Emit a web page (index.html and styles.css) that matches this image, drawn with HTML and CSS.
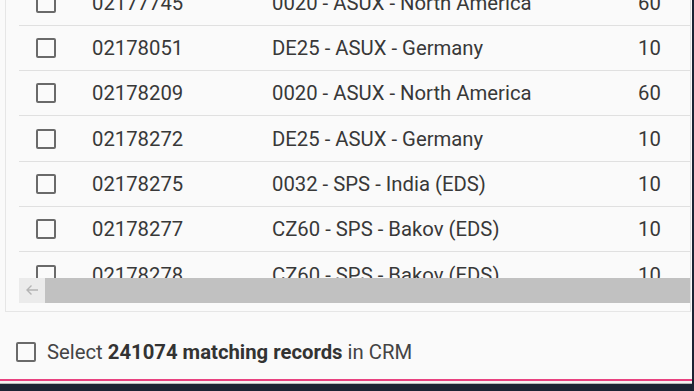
FILE: index.html
```
<!DOCTYPE html>
<html>
<head>
<meta charset="utf-8">
<link rel="stylesheet" href="styles.css">
</head>
<body>
<div class="app">
  <div class="screen">
    <div class="panel">
      <div class="viewport">
        <div class="rows">
          <div class="row"><span class="cell-check"><span class="box"></span></span><span>02177745</span><span>0020 - ASUX - North America</span><span>60</span></div>
          <div class="row"><span class="cell-check"><span class="box"></span></span><span>02178051</span><span>DE25 - ASUX - Germany</span><span>10</span></div>
          <div class="row"><span class="cell-check"><span class="box"></span></span><span>02178209</span><span>0020 - ASUX - North America</span><span>60</span></div>
          <div class="row"><span class="cell-check"><span class="box"></span></span><span>02178272</span><span>DE25 - ASUX - Germany</span><span>10</span></div>
          <div class="row"><span class="cell-check"><span class="box"></span></span><span>02178275</span><span>0032 - SPS - India (EDS)</span><span>10</span></div>
          <div class="row"><span class="cell-check"><span class="box"></span></span><span>02178277</span><span>CZ60 - SPS - Bakov (EDS)</span><span>10</span></div>
          <div class="row"><span class="cell-check"><span class="box"></span></span><span>02178278</span><span>CZ60 - SPS - Bakov (EDS)</span><span>10</span></div>
        </div>
      </div>
      <div class="hscroll">
        <span class="hbtn"><svg width="14" height="12" viewBox="0 0 14 12"><path d="M13 6H2M6.5 1.5L2 6l4.5 4.5" fill="none" stroke="#b4b4b4" stroke-width="1.4"/></svg></span>
        <span class="thumb"></span>
      </div>
    </div>
    <div class="footer">
      <span class="box"></span>
      <span class="footer-text">Select <b>241074 matching records</b> in CRM</span>
    </div>
  </div>
  <div class="strip"></div>
</div>
</body>
</html>
```
FILE: styles.css
```
html, body {
  margin: 0;
  padding: 0;
  background: #1b2333;
}
.app {
  width: 694px;
  height: 391px;
  overflow: hidden;
  font-family: Roboto, "Liberation Sans", sans-serif;
  color: #383838;
}
.screen {
  width: 692px;
  height: 379px;
  background: #fafafa;
  border-bottom: 2px solid #e94280;
  overflow: hidden;
}
.strip {
  width: 692px;
  height: 2px;
  background: #f2f2f2;
  border-bottom: 1px solid #b8b8b8;
}
.panel {
  margin-left: 5px;
  width: 686px;
  border-left: 1px solid #e6e6e6;
  border-right: 1px solid #dedede;
  border-bottom: 1px solid #e6e6e6;
  padding: 0 0 8px 13px;
  box-sizing: border-box;
}
.viewport {
  height: 277.7px;
  overflow: hidden;
}
.rows {
  margin-top: -19.6px;
  width: 720px;
}
.row {
  display: grid;
  grid-template-columns: 73px 180px 366px 1fr;
  align-items: center;
  height: 45.33px;
  box-sizing: border-box;
  border-bottom: 1px solid #e0e0e0;
  font-size: 20.3px;
}
.cell-check {
  display: flex;
  padding-left: 17px;
}
.box {
  display: inline-block;
  width: 20px;
  height: 20px;
  box-sizing: border-box;
  border: 2px solid #6a6a6a;
  border-radius: 2px;
}
.hscroll {
  display: flex;
  height: 25.5px;
}
.hbtn {
  width: 26px;
  background: #ebebeb;
  display: flex;
  align-items: center;
  justify-content: center;
}
.thumb {
  flex: 1;
  background: #c1c1c1;
}
.footer {
  display: flex;
  align-items: center;
  gap: 11px;
  padding: 28px 0 0 16px;
  font-size: 20.3px;
  color: #444;
}
.footer-text b {
  font-weight: 700;
  color: #333;
}
```
